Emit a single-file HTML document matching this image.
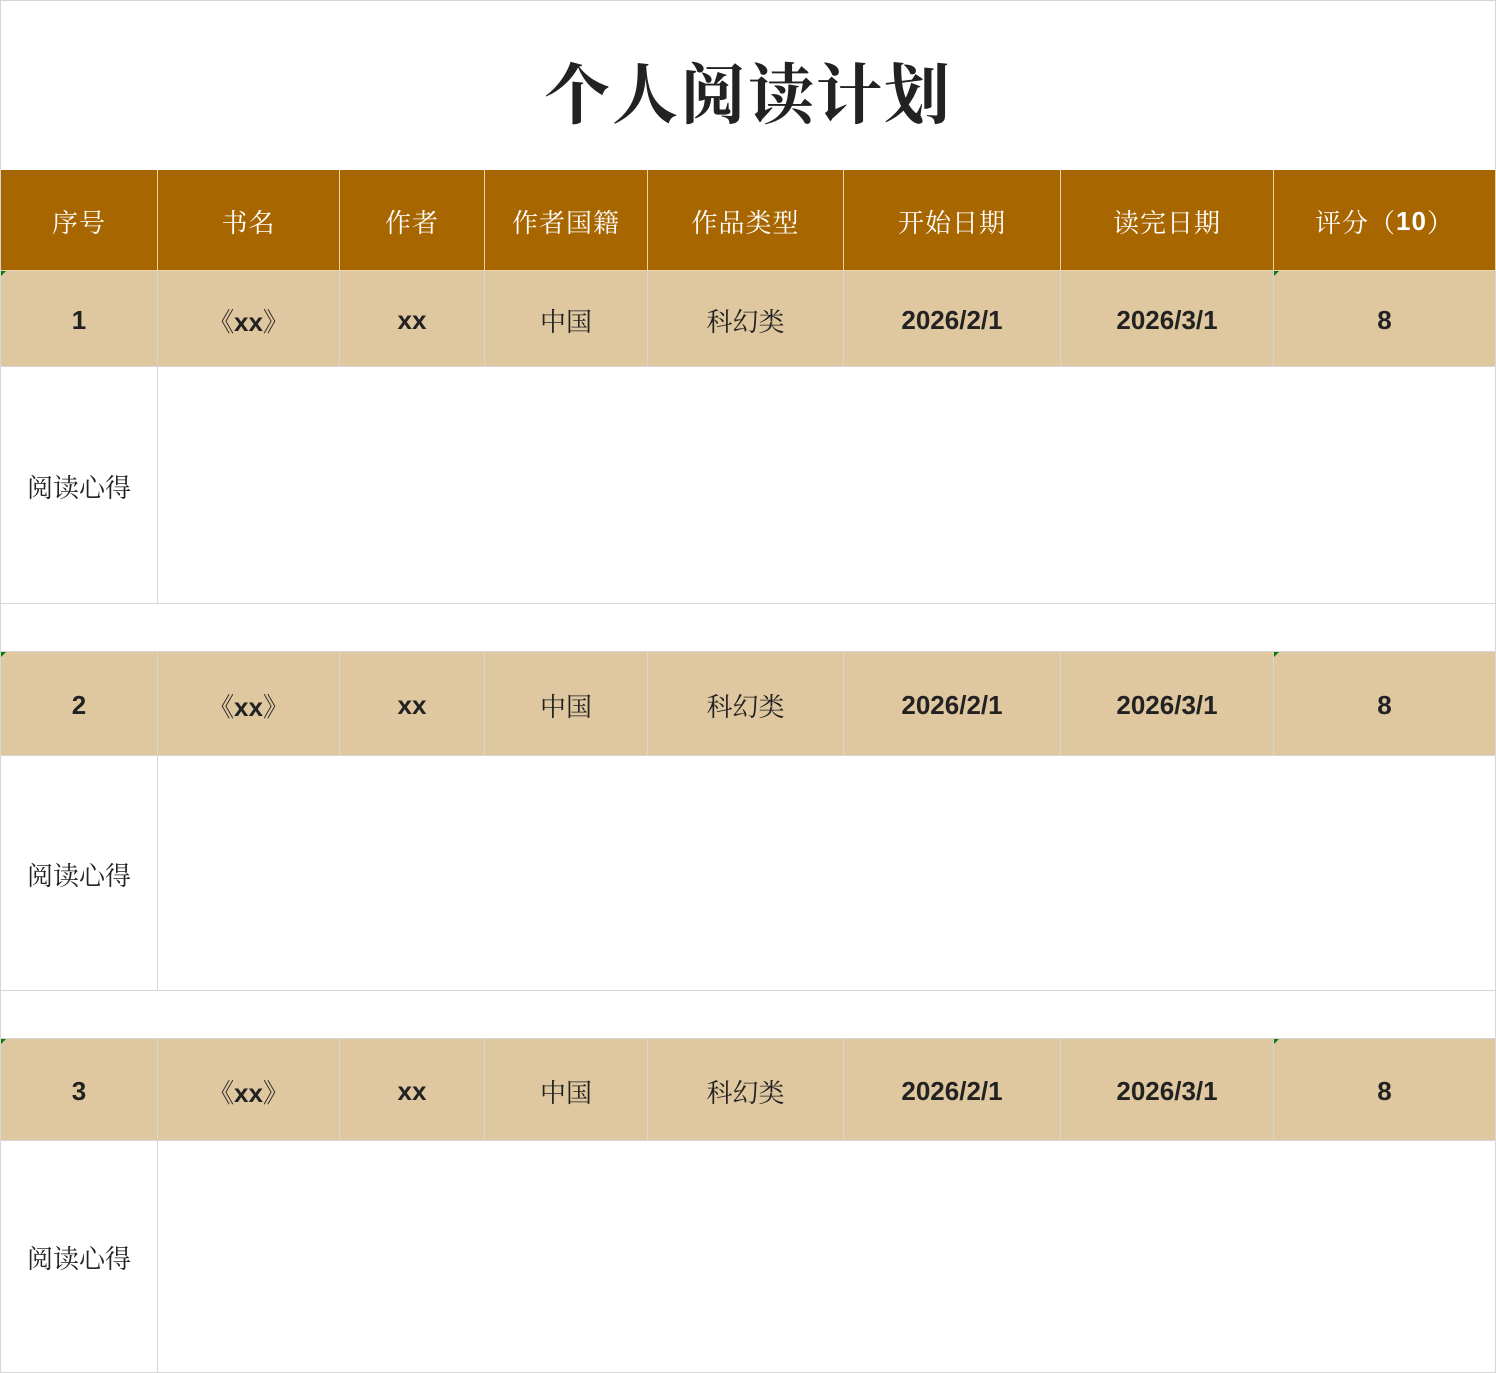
<!DOCTYPE html>
<html><head><meta charset="utf-8"><style>
body{margin:0;width:1496px;height:1373px;background:#fff;position:relative;overflow:hidden}
.c{position:absolute;display:flex;align-items:center;justify-content:center;box-sizing:border-box;border-right:1px solid #d6d6d6;border-bottom:1px solid #d6d6d6}
.h{background:#a86600;color:#fff;font-family:"Liberation Serif","Noto Serif CJK SC",serif;font-size:26px;letter-spacing:1px;border-color:#e8d3b0;padding-top:2px}
.d{background:#dfc79f;color:#222;font-family:"Liberation Sans","Noto Serif CJK SC",sans-serif;font-size:26px;font-weight:bold;padding-top:3px}
.d.z{font-family:"Noto Serif CJK SC",serif;font-weight:normal;color:#222}
.n{font-family:"Noto Serif CJK SC",serif;font-size:26px;color:#222;padding-top:2px}
.g{position:absolute;width:0;height:0;border-top:5px solid #0a7a0a;border-right:5px solid transparent}
</style></head><body>
<div style="position:absolute;left:0;top:0;width:1496px;height:1373px;box-sizing:border-box;border:1px solid #d6d6d6;border-bottom:none"></div>
<div style="position:absolute;left:0;top:38px;width:1496px;text-align:center;font-family:'Noto Serif CJK SC',serif;font-weight:bold;font-size:66px;line-height:104px;color:#222;letter-spacing:2px">个人阅读计划</div>

<div class="c h" style="left:1px;top:170px;width:157px;height:101px">序号</div>
<div class="c h" style="left:158px;top:170px;width:182px;height:101px">书名</div>
<div class="c h" style="left:340px;top:170px;width:145px;height:101px">作者</div>
<div class="c h" style="left:485px;top:170px;width:163px;height:101px">作者国籍</div>
<div class="c h" style="left:648px;top:170px;width:196px;height:101px">作品类型</div>
<div class="c h" style="left:844px;top:170px;width:217px;height:101px">开始日期</div>
<div class="c h" style="left:1061px;top:170px;width:213px;height:101px">读完日期</div>
<div class="c h" style="left:1274px;top:170px;width:222px;height:101px">评分（<b style="font-family:'Liberation Sans',sans-serif">10</b>）</div>

<!-- row 1 -->
<div class="c d" style="left:1px;top:271px;width:157px;height:96px">1</div>
<div class="c d" style="left:158px;top:271px;width:182px;height:96px">《xx》</div>
<div class="c d" style="left:340px;top:271px;width:145px;height:96px">xx</div>
<div class="c d z" style="left:485px;top:271px;width:163px;height:96px">中国</div>
<div class="c d z" style="left:648px;top:271px;width:196px;height:96px">科幻类</div>
<div class="c d" style="left:844px;top:271px;width:217px;height:96px">2026/2/1</div>
<div class="c d" style="left:1061px;top:271px;width:213px;height:96px">2026/3/1</div>
<div class="c d" style="left:1274px;top:271px;width:222px;height:96px">8</div>
<div class="c n" style="left:1px;top:367px;width:157px;height:237px">阅读心得</div>
<div class="c" style="left:158px;top:367px;width:1338px;height:237px"></div>
<div class="c" style="left:1px;top:604px;width:1495px;height:48px;border-right:none"></div>
<div class="g" style="left:1px;top:271px"></div><div class="g" style="left:1274px;top:271px"></div>

<!-- row 2 -->
<div class="c d" style="left:1px;top:652px;width:157px;height:104px">2</div>
<div class="c d" style="left:158px;top:652px;width:182px;height:104px">《xx》</div>
<div class="c d" style="left:340px;top:652px;width:145px;height:104px">xx</div>
<div class="c d z" style="left:485px;top:652px;width:163px;height:104px">中国</div>
<div class="c d z" style="left:648px;top:652px;width:196px;height:104px">科幻类</div>
<div class="c d" style="left:844px;top:652px;width:217px;height:104px">2026/2/1</div>
<div class="c d" style="left:1061px;top:652px;width:213px;height:104px">2026/3/1</div>
<div class="c d" style="left:1274px;top:652px;width:222px;height:104px">8</div>
<div class="c n" style="left:1px;top:756px;width:157px;height:235px">阅读心得</div>
<div class="c" style="left:158px;top:756px;width:1338px;height:235px"></div>
<div class="c" style="left:1px;top:991px;width:1495px;height:48px;border-right:none"></div>
<div class="g" style="left:1px;top:652px"></div><div class="g" style="left:1274px;top:652px"></div>

<!-- row 3 -->
<div class="c d" style="left:1px;top:1039px;width:157px;height:102px">3</div>
<div class="c d" style="left:158px;top:1039px;width:182px;height:102px">《xx》</div>
<div class="c d" style="left:340px;top:1039px;width:145px;height:102px">xx</div>
<div class="c d z" style="left:485px;top:1039px;width:163px;height:102px">中国</div>
<div class="c d z" style="left:648px;top:1039px;width:196px;height:102px">科幻类</div>
<div class="c d" style="left:844px;top:1039px;width:217px;height:102px">2026/2/1</div>
<div class="c d" style="left:1061px;top:1039px;width:213px;height:102px">2026/3/1</div>
<div class="c d" style="left:1274px;top:1039px;width:222px;height:102px">8</div>
<div class="c n" style="left:1px;top:1141px;width:157px;height:232px">阅读心得</div>
<div class="c" style="left:158px;top:1141px;width:1338px;height:232px"></div>
<div class="g" style="left:1px;top:1039px"></div><div class="g" style="left:1274px;top:1039px"></div>
</body></html>
